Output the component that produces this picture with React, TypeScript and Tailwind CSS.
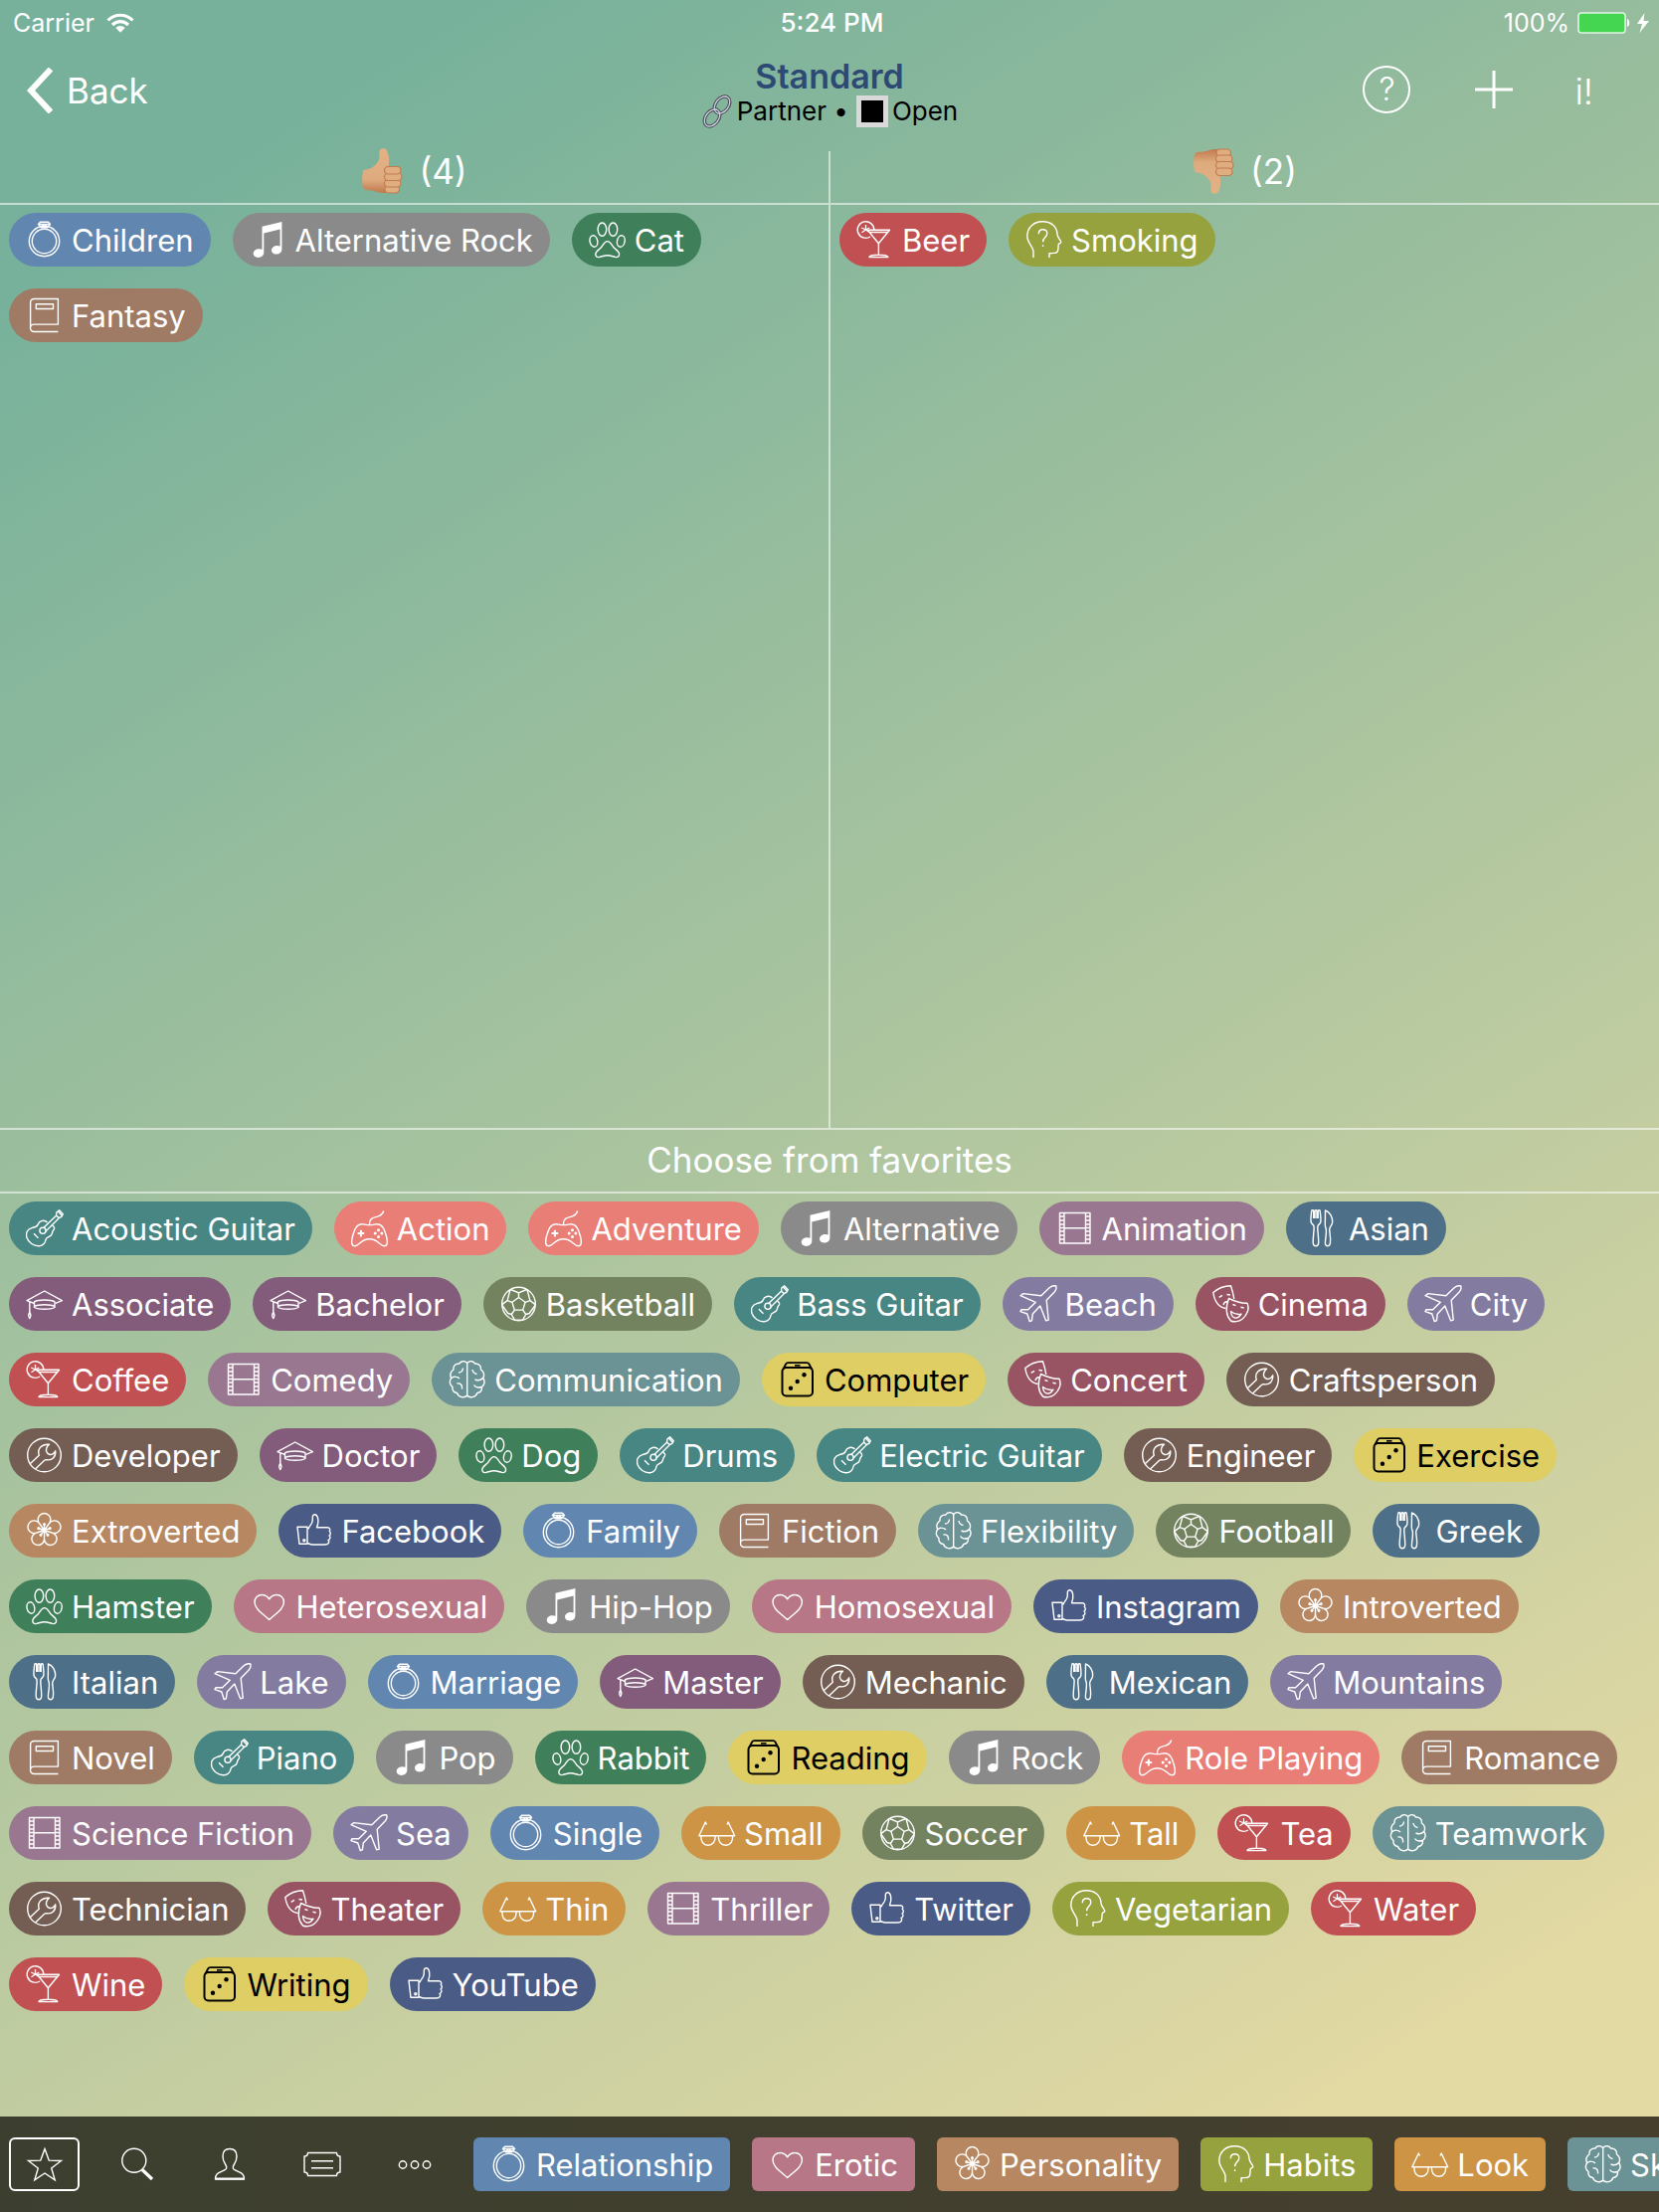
import type { ReactNode } from 'react';

type Category =
  | 'ring' | 'music' | 'paw' | 'book' | 'cocktail' | 'head' | 'guitar' | 'gamepad' | 'film' | 'cutlery' | 'cap'
  | 'ball' | 'plane' | 'masks' | 'brain' | 'dice' | 'wrench' | 'flower' | 'thumb' | 'heart' | 'glasses';

const PETAL_TURNS = [0, 72, 144, 216, 288];
const FILM_HOLES = [7, 11, 15, 18.5, 22, 26, 30];

const COLORS: Record<Category, string> = {
  ring: 'bg-[#6186b0] text-white',
  music: 'bg-[#8a8a8a] text-white',
  paw: 'bg-[#3f7f5a] text-white',
  book: 'bg-[#9f7b65] text-white',
  cocktail: 'bg-[#c05052] text-white',
  head: 'bg-[#95a23d] text-white',
  guitar: 'bg-[#488683] text-white',
  gamepad: 'bg-[#e97e77] text-white',
  film: 'bg-[#9a7790] text-white',
  cutlery: 'bg-[#4d6f87] text-white',
  cap: 'bg-[#835b7b] text-white',
  ball: 'bg-[#74835f] text-white',
  plane: 'bg-[#847ca0] text-white',
  masks: 'bg-[#985463] text-white',
  brain: 'bg-[#6b9294] text-white',
  dice: 'bg-[#dece64] text-black',
  wrench: 'bg-[#745e53] text-white',
  flower: 'bg-[#b68760] text-white',
  thumb: 'bg-[#4a5b86] text-white',
  heart: 'bg-[#b77786] text-white',
  glasses: 'bg-[#cc9444] text-white',
};

const DRAWINGS: Record<Category, ReactNode> = {
  ring: (
    <>
      <circle cx="18.5" cy="20.5" r="15.2" />
      <circle cx="18.5" cy="20.5" r="12.2" />
      <path d="M14.5 1.2h8l2 2.3-3 3.2h-6l-3-3.2z M12.5 3.5h12 M16.5 3.5l2 3 2-3" />
    </>
  ),
  music: (
    <path
      d="M12.5 5.7 32.4 1V28.8c0 3-2.6 4.8-5.6 4.8-2.8 0-4.8-1.6-4.8-4 0-2.7 2.8-4.6 5.8-4.6 1 0 2 .2 2.8.6V8.6L14.3 12.4V32c0 3-2.8 4.9-5.8 4.9-2.8 0-4.8-1.6-4.8-4.1 0-2.7 2.8-4.6 5.8-4.6 1.1 0 2.2.2 3 .6z"
      fill="currentColor"
      stroke="none"
    />
  ),
  paw: (
    <>
      <ellipse cx="13.4" cy="8.6" rx="4.3" ry="6.6" />
      <ellipse cx="24.4" cy="8.6" rx="4.3" ry="6.6" />
      <ellipse cx="4.9" cy="20.5" rx="3.8" ry="5.8" transform="rotate(-12 4.9 20.5)" />
      <ellipse cx="32.3" cy="20.5" rx="3.8" ry="5.8" transform="rotate(12 32.3 20.5)" />
      <path d="M18.7 20.6c3.2 0 4 3.6 6.3 6.2 2 2.2 5.6 3.6 5.6 7 0 2.4-1.8 3.2-4.2 2.6-2.6-.6-4.8-1.6-7.7-1.6s-5.1 1-7.7 1.6c-2.4.6-4.2-.2-4.2-2.6 0-3.4 3.6-4.8 5.6-7 2.3-2.6 3.1-6.2 6.3-6.2z" />
    </>
  ),
  book: (
    <>
      <path d="M32.4 35.5H8.2a3.6 3.6 0 0 1 0-7.4h24.2V2.5H8.2C6 2.5 4.6 3.9 4.6 6v25.5" />
      <path d="M10.3 7.7h17.2v4.8H10.3z" />
    </>
  ),
  cocktail: (
    <>
      <path d="M17.8 9A8.3 8.3 0 1 0 14 16" />
      <path d="M9.5 4v5l-4 2.8M9.5 9l3.3 2.2M9.5 9 5.2 7M9.5 9l3.8-2" strokeWidth="1.3" />
      <path d="M11.3 9.3h22.2L22.4 22.8 11.3 9.3z M13 11.5h18.7 M22.4 22.8v11.4 M13 36.6c0-1.7 6-2.4 9.4-2.4s9.4.7 9.4 2.4z" />
    </>
  ),
  head: (
    <>
      <path d="M8 37v-6.5C8 26.5 1.8 22 1.8 15.5 1.8 6.5 8.5.8 17.3.8S31.6 6 32 13.5c0 2.8 3.8 6.2 3.8 8 0 1.1-2.4 1.3-2.6 2.5-.4 2.5.3 5.3-1.2 7.2-1.6 1.8-4.5 1.3-8 1.5V37" />
      <path d="M13.3 13.2c0-2.7 1.8-4.4 4.3-4.4s4.2 1.7 4.2 4c0 3.7-4.2 4-4.2 8.5 M17.6 24.3v1.6" />
    </>
  ),
  guitar: (
    <>
      <path d="M21.5 13c-3-3.2-8.3-1.5-9.3 2-.8 3-3 2.6-6.2 3.6-4.7 1.4-6.4 5.2-5 9.8 1.6 4.7 6.8 8.8 12.5 8.3 4.2-.4 6-3.2 6.5-6.3.4-2.5 3.1-2.5 5-4 1.9-1.6 1.2-4 2.9-5.8 1.4-1.6.6-3.6-2-5.2" />
      <circle cx="17" cy="21.3" r="3.1" />
      <path d="m18 18.3 13-12.5M20 22 33.5 8.5M30.5 6l.5-3.3 2.6-1.9 3.7 3.9-1.5 2.7-2.6 1.1zM32 1.5l4.5 5M8 24.3l4.5 4.5" />
    </>
  ),
  gamepad: (
    <>
      <path d="M18.5 15.6c-4 0-6-1.1-8-.8C5 15.5 3.5 20 1.5 27c-1.5 6-1 9.8 2 9.8 5 0 6-7 15-7s10 7 15 7c3 0 3.5-3.8 2-9.8-2-7-3.5-11.5-9-12.2-2-.3-4 .8-8 .8zM18.5 15.5C18 7.5 24 8.5 28 6.7c3-1.3 4-2.7 4.7-5.2" />
      <path d="M9.9 20.8v6.6M6.6 24.1h6.6" strokeWidth="2" />
      <g fill="currentColor" stroke="none">
        <circle cx="27.5" cy="20.8" r="1.5" />
        <circle cx="27.5" cy="27.4" r="1.5" />
        <circle cx="24.2" cy="24.1" r="1.5" />
        <circle cx="30.8" cy="24.1" r="1.5" />
      </g>
    </>
  ),
  film: (
    <>
      <path d="M3.5 3.5h30.5v30.5H3.5zM8 3.5V34M29.5 3.5V34M8 18.7h21.5" />
      {FILM_HOLES.map((y) => (
        <path key={y} d={`M3.5 ${y}H8M29.5 ${y}H34`} />
      ))}
    </>
  ),
  cutlery: (
    <>
      <path d="M8.7 1.5c-.5 4-1.2 9-.5 11.5.6 2 2.8 2 2.9 4.5.2 5-1.2 11-.9 16 .2 4.3 5.3 4.3 5.5 0 .3-5-1.1-11-.9-16 .1-2.5 2.3-2.5 2.9-4.5.7-2.5 0-7.5-.5-11.5-.2-1-2-1-2 0v7.5M8.7 1.5c.2-1 2-1 2 0V9M12 9V1.5c.2-1 1.8-1 2 0V9" />
      <path d="M22.5 1c4.5 1.2 7.2 6.5 7.2 11.5 0 3.3-3 4.8-3 7.5 0 4 1.5 8 .7 14-.4 3.7-5 3.7-5 0 0-4.5 1.3-8.5 1-13-.2-2.5-1.2-3.5-1.1-6z" />
    </>
  ),
  cap: (
    <>
      <path d="M8.5 18.5 1 15.7 18.7 6l17.7 9.7-6.6 2.7" />
      <path d="M8.5 16.8c4-2.4 16.5-2.4 20.5 0v5.7c-4 2.4-16.5 2.4-20.5 0zM8.5 21.5c4-2.4 16.5-2.4 20.5 0M3.8 17v10.5" />
      <path d="M3.8 27.5c-1.3 1.8-2 3.2 0 6 2-2.8 1.3-4.2 0-6z" />
    </>
  ),
  ball: (
    <>
      <circle cx="18.5" cy="19" r="16.8" />
      <path d="m18.5 12.5 6.6 4.8-2.4 7.8h-8.4l-2.4-7.8zM18.5 12.5V7.8M25.1 17.3l4.8-1.7M22.7 25.1l3 4.4M14.3 25.1l-3 4.4M11.9 17.3l-4.8-1.7M10.5 4.5l8 3.3 8-3.3M27 4.5l2.9 11.1 5.3 4M35 20.5l-5.8 8-3.5 1-3.2 5.8M22.5 35.3h-8M14.5 35.3l-3.2-5.8-3.5-1-5.8-8M1.8 19.6l5.3-4L10 4.5" />
    </>
  ),
  plane: (
    <path d="M36.8 1c-2.3-.8-5 .2-7 2l-8 7.8-18-2.2L1 10.7l15.3 6.6-7.7 7.5-6.6-.2-1 2 6.8 2.4 2.4 7.5 2.2-.7.9-6.9 7.5-8 5.9 15 2.5-.8-2-19.8 8-8.3c1.6-1.8 2.2-4 1.6-5.8z" />
  ),
  masks: (
    <>
      <path d="M16.5 13.5c6 2.8 12 5.2 18.5 4.7 2.8 5.8-.5 12.5-5 16-3.5 2.7-8.5 3.2-11.5 1.8-6-6.5-5-14.5-2-22.5z" />
      <path d="M13.5 23.5C6 22.3 2 15.5.8 7.5 5.5 3.5 11.5 1 18.5.8c1.3 3.9 2.5 8.3 3.3 13M6.7 12.3l3.3-2M14.5 9.5l3.5.5M11 20c.5-2.5 2.3-3.5 4.5-3.2M20.5 19.5l3 1.2M28.5 22.3l3.2.7M18.5 26.5c3.5 2.8 6.5 3.6 10.5 2.7-2 3.3-4 4.3-6.5 3.8-2.3-.5-3.7-3-4-6.5z" />
    </>
  ),
  brain: (
    <path d="M18.7 2.5C16.5-.3 12 .3 11 3 7 2.8 4.5 5.5 5 9c-3 1.8-4 5.5-2.3 8.5C.5 20.5 1 24.5 4 26.5c-.5 3.5 1.5 5.8 4.5 6 1.5 4.5 8 5.5 10.2 2.5V2.5zM18.7 2.5c2.2-2.8 6.7-2.2 7.7.5 4-.2 6.5 2.5 6 6 3 1.8 4 5.5 2.3 8.5 2.2 3 1.7 7-1.3 9 .5 3.5-1.5 5.8-4.5 6-1.5 4.5-8 5.5-10.2 2.5M14.5 7.5c-.3 3-2 4.5-4.5 4.5M3 17.5c2.5-1.8 6-1.5 8 .5M8.5 23c3.5-.5 5.5 1.5 5 5.5M24 9c.3 2.5 2 4 4.5 4.5M34.5 17.5c-2 2.3-5 2.8-8 1.5M33 26.5c-2.5 1-6 .5-7.5-2" />
  ),
  dice: (
    <>
      <rect x="3.5" y="7" width="30.5" height="28.5" rx="4" strokeWidth="2" />
      <path d="m4.5 8.5 2.6-5c.5-1 1-1.3 2.2-1.3h19c1.2 0 1.7.3 2.2 1.3l2.6 5" strokeWidth="1.8" />
      <path d="M16 4.8h5.5" strokeWidth="1.6" />
      <g fill="currentColor" stroke="none">
        <circle cx="25.5" cy="14.3" r="2.2" />
        <circle cx="18.7" cy="21" r="2.2" />
        <circle cx="12" cy="27.8" r="2.2" />
      </g>
    </>
  ),
  wrench: (
    <>
      <circle cx="18.5" cy="19" r="16.8" />
      <path d="m4.5 27.5 8.8-8.2C11 12.5 16 7.5 23.5 8.3c-2 1.7-3.7 4-2.8 7.2.7 2 1.5 2.5 3.3 3 2.5.2 4.5-1.5 5.7-3.7.6 5.7-3 9.7-8.7 9-1-.1-1.5-.2-2 .3L9.5 33" />
    </>
  ),
  flower: (
    <>
      <path d="M13.6 11.8a6.3 6.3 0 1 1 9.8 0 6.3 6.3 0 1 1 3 9.3 6.3 6.3 0 1 1-7.9 5.7 6.3 6.3 0 1 1-7.9-5.7 6.3 6.3 0 1 1 3-9.3z" />
      {PETAL_TURNS.map((turn) => (
        <g key={turn} transform={`rotate(${turn} 18.5 18.5)`}>
          <path d="M18.5 18.5v-6.5M18.5 18.5l4.7-6.5" />
          <circle cx="18.5" cy="12.5" r="1.5" fill="currentColor" stroke="none" />
        </g>
      ))}
    </>
  ),
  thumb: (
    <>
      <path d="M2 15.3h10v17H4zM12 31.5c2 .5 3 1.5 5 1.5h12.5c4 0 5-3 3.5-4.5 2.2-.8 2.5-3.3 1-4.5 1.7-1 1.7-3.5.2-4.5 1.2-1.5.3-3.8-2-3.8H21.5c1.2-2.7 1.7-5.5 1.2-8.5-.4-2.5-1.2-4.5-3.2-4.5-2.5 0-2.2 2.5-2.2 5.5 0 4-3 5.5-4.3 9" />
      <circle cx="8.8" cy="28.7" r="1" />
    </>
  ),
  heart: <path d="M18.7 32.5C11 25.5 4 21.5 4 14.8c0-4.3 3.2-7.3 7.2-7.3 3.3 0 5.8 1.6 7.5 4.3 1.7-2.7 4.2-4.3 7.5-4.3 4 0 7.2 3 7.2 7.3 0 6.7-7 10.7-14.7 17.7z" />,
  glasses: (
    <path d="M8.5 10.5 7.3 8 .8 21.7h35.9L30.2 8 29 10.5M2.8 21.7c0 6 2.4 9.5 7 9.5s7.4-3.3 7.4-9.5M20.3 21.7c0 6.2 2.8 9.5 7.4 9.5s7-3.5 7-9.5" />
  ),
};

function Drawing({ children }: { children: ReactNode }) {
  return (
    <svg
      viewBox="0 0 38 38"
      className="size-[38px] shrink-0"
      fill="none"
      stroke="currentColor"
      strokeWidth="1.4"
      strokeLinejoin="round"
      aria-hidden="true"
    >
      {children}
    </svg>
  );
}

type Tag = [string, Category];

const LIKES: Tag[] = [['Children', 'ring'], ['Alternative Rock', 'music'], ['Cat', 'paw'], ['Fantasy', 'book']];
const DISLIKES: Tag[] = [['Beer', 'cocktail'], ['Smoking', 'head']];

const FAVORITES: Tag[] = [
  ['Acoustic Guitar', 'guitar'], ['Action', 'gamepad'], ['Adventure', 'gamepad'], ['Alternative', 'music'],
  ['Animation', 'film'], ['Asian', 'cutlery'], ['Associate', 'cap'], ['Bachelor', 'cap'], ['Basketball', 'ball'],
  ['Bass Guitar', 'guitar'], ['Beach', 'plane'], ['Cinema', 'masks'], ['City', 'plane'], ['Coffee', 'cocktail'],
  ['Comedy', 'film'], ['Communication', 'brain'], ['Computer', 'dice'], ['Concert', 'masks'],
  ['Craftsperson', 'wrench'], ['Developer', 'wrench'], ['Doctor', 'cap'], ['Dog', 'paw'], ['Drums', 'guitar'],
  ['Electric Guitar', 'guitar'], ['Engineer', 'wrench'], ['Exercise', 'dice'], ['Extroverted', 'flower'],
  ['Facebook', 'thumb'], ['Family', 'ring'], ['Fiction', 'book'], ['Flexibility', 'brain'], ['Football', 'ball'],
  ['Greek', 'cutlery'], ['Hamster', 'paw'], ['Heterosexual', 'heart'], ['Hip-Hop', 'music'],
  ['Homosexual', 'heart'], ['Instagram', 'thumb'], ['Introverted', 'flower'], ['Italian', 'cutlery'],
  ['Lake', 'plane'], ['Marriage', 'ring'], ['Master', 'cap'], ['Mechanic', 'wrench'], ['Mexican', 'cutlery'],
  ['Mountains', 'plane'], ['Novel', 'book'], ['Piano', 'guitar'], ['Pop', 'music'], ['Rabbit', 'paw'],
  ['Reading', 'dice'], ['Rock', 'music'], ['Role Playing', 'gamepad'], ['Romance', 'book'],
  ['Science Fiction', 'film'], ['Sea', 'plane'], ['Single', 'ring'], ['Small', 'glasses'], ['Soccer', 'ball'],
  ['Tall', 'glasses'], ['Tea', 'cocktail'], ['Teamwork', 'brain'], ['Technician', 'wrench'],
  ['Theater', 'masks'], ['Thin', 'glasses'], ['Thriller', 'film'], ['Twitter', 'thumb'], ['Vegetarian', 'head'],
  ['Water', 'cocktail'], ['Wine', 'cocktail'], ['Writing', 'dice'], ['YouTube', 'thumb'],
];

const CATEGORIES: Tag[] = [
  ['Relationship', 'ring'], ['Erotic', 'heart'], ['Personality', 'flower'], ['Habits', 'head'],
  ['Look', 'glasses'], ['Skills', 'brain'],
];

function TagButton({ tag, shape }: { tag: Tag; shape: string }) {
  const [label, category] = tag;
  return (
    <button
      type="button"
      className={`flex h-[54px] shrink-0 items-center gap-2 px-[17px] text-[31px] leading-10 whitespace-nowrap ${shape} ${COLORS[category]}`}
    >
      <Drawing>{DRAWINGS[category]}</Drawing>
      <span className="pt-0.5">{label}</span>
    </button>
  );
}

function TagList({ tags }: { tags: Tag[] }) {
  return (
    <div className="flex flex-wrap gap-[22px] pt-2 pr-4 pl-[9px]">
      {tags.map((tag) => (
        <TagButton key={tag[0]} tag={tag} shape="rounded-full" />
      ))}
    </div>
  );
}

function HandEmoji({ down = false }: { down?: boolean }) {
  return (
    <svg viewBox="0 0 42 46" className={down ? 'h-[46px] w-[42px] -scale-y-100' : 'h-[46px] w-[42px]'} aria-hidden="true">
      <defs>
        <linearGradient id="skin" x1="0" y1="0" x2="0" y2="1">
          <stop offset="0" stopColor="#e3b284" />
          <stop offset="0.7" stopColor="#deab7e" />
          <stop offset="1" stopColor="#c07a4c" />
        </linearGradient>
      </defs>
      <path
        d="M2.5 22C1 25 .8 34 1.8 39c.6 3 3 3.5 6.2 3.2C13 42 16 45 24 45h9c3 0 4.5-2 4-4.5L29 20c-1-1.5-1.5-3-1-6 .5-4.5-.5-9-2.5-12.5-1.5-2-7-1.5-7 1.5 0 5.5.5 8.5-2.5 12C13 19 8.5 21.5 2.5 22z"
        fill="url(#skin)"
      />
      <g fill="#e0ad80" stroke="#bf7d50" strokeWidth="1.2">
        <rect x="24" y="37.5" width="14.5" height="7.5" rx="3.7" />
        <rect x="23.5" y="31.5" width="16.5" height="7.5" rx="3.7" />
        <rect x="23.5" y="25" width="17.5" height="7.5" rx="3.7" />
        <rect x="23.5" y="18.5" width="16.5" height="7.5" rx="3.7" />
      </g>
    </svg>
  );
}

function Column({ title, down, count, tags }: { title: string; down?: boolean; count: number; tags: Tag[] }) {
  return (
    <section aria-label={title} className="flex min-w-0 flex-1 flex-col">
      <h2 className="flex h-[54px] items-center justify-center gap-4 border-b-2 border-white/55 pb-3 text-[35px] leading-10">
        <HandEmoji down={down} />({count})
      </h2>
      <TagList tags={tags} />
    </section>
  );
}

const TOOLS: { label: string; drawing: ReactNode }[] = [
  {
    label: 'Favorites',
    drawing: <path d="m19 3.5 4.2 11.6 12.3.4-9.8 7.5 3.5 11.8L19 28l-10.2 6.8L12.3 23l-9.8-7.5 12.3-.4z" strokeLinejoin="miter" />,
  },
  {
    label: 'Search',
    drawing: (
      <>
        <circle cx="15.8" cy="15.3" r="12" />
        <path d="m24 24.5 10 9.5" strokeWidth="3.2" />
      </>
    ),
  },
  {
    label: 'Person',
    drawing: (
      <>
        <path d="M4.5 34c0-7.5 6-6.5 10.5-10 1.2-1.2.8-3-.5-5-1.7-2.5-2.5-5-2.5-8 0-5 2.5-7.5 7-7.5s7 2.5 7 7.5c0 3-.8 5.5-2.5 8-1.3 2-1.7 3.8-.5 5C27.5 27.5 33.5 26.5 33.5 34z" />
        <path d="M4.5 33.5h29" strokeWidth="2" />
      </>
    ),
  },
  {
    label: 'List',
    drawing: <path d="M4.5 7.5h29c0 2.200 1.300 3.500 3.500 3.500v16c-2.200 0-3.500 1.300-3.500 3.500h-29c0-2.200-1.300-3.500-3.500-3.500v-16c2.200 0 3.500-1.300 3.500-3.500zM8 15.700h22M8 22.700h22" />,
  },
  {
    label: 'More',
    drawing: (
      <>
        <circle cx="7" cy="19.5" r="3.7" />
        <circle cx="19" cy="19.5" r="3.7" />
        <circle cx="31" cy="19.5" r="3.7" />
      </>
    ),
  },
];

function StatusBar() {
  return (
    <div className="grid h-11 grid-cols-[1fr_auto_1fr] items-center pt-px pr-2 pl-[13px] text-[25px] leading-8">
      <div className="flex items-center gap-3">
        <span>Carrier</span>
        <svg viewBox="0 0 28 20" className="h-5 w-7" fill="none" stroke="currentColor" strokeWidth="3.2" aria-hidden="true">
          <path d="M1.5 7.5a17.5 17.5 0 0 1 25 0M6 12a11.3 11.3 0 0 1 16 0" />
          <path d="M14 19.8 9.3 15a6.6 6.6 0 0 1 9.4 0z" fill="currentColor" stroke="none" />
        </svg>
      </div>
      <span className="text-[26px] font-medium">5:24 PM</span>
      <div className="flex items-center justify-end gap-2">
        <span>100%</span>
        <svg viewBox="0 0 74 22" className="h-[22px] w-[74px]" aria-hidden="true">
          <rect x="1" y="1" width="47" height="20" rx="3" fill="#44d551" stroke="#fff" strokeOpacity=".8" strokeWidth="1.6" />
          <path d="M50 7c3 .5 3 7.5 0 8z" fill="#fff" />
          <path d="M67.5 1 60 12h5l-2.5 9L72 9h-5.5z" fill="#fff" />
        </svg>
      </div>
    </div>
  );
}

function NavBar() {
  return (
    <header className="grid h-[108px] grid-cols-[1fr_auto_1fr] items-center pb-4">
      <button type="button" className="flex items-center gap-3.5 justify-self-start pt-0.5 pl-[27px] text-[35px] leading-10">
        <svg viewBox="0 0 26 46" className="h-[46px] w-[26px]" fill="none" stroke="currentColor" strokeWidth="6" aria-hidden="true">
          <path d="M24 1.5 4 23 24 44.5" />
        </svg>
        Back
      </button>
      <div className="pt-2 text-center">
        <h1 className="text-[34px] leading-9 font-semibold text-[#2c4a73]">Standard</h1>
        <p className="flex items-center justify-center text-[26px] leading-8 text-black">
          <svg viewBox="0 0 32 34" className="mr-1 h-[34px] w-8" fill="none" aria-hidden="true">
            <g strokeWidth="3.4" stroke="#4c4650">
              <ellipse cx="21" cy="10.5" rx="6.5" ry="9.5" transform="rotate(38 21 10.5)" />
              <ellipse cx="11" cy="23.5" rx="6.5" ry="9.5" transform="rotate(38 11 23.5)" />
            </g>
            <g strokeWidth="1.3" stroke="#c9d3e6">
              <ellipse cx="21" cy="10.5" rx="6.5" ry="9.5" transform="rotate(38 21 10.5)" />
              <ellipse cx="11" cy="23.5" rx="6.5" ry="9.5" transform="rotate(38 11 23.5)" />
            </g>
          </svg>
          Partner •
          <span className="mr-1 ml-2 size-8 border-[5px] border-[#d9d9d9] bg-black" />
          Open
        </p>
      </div>
      <div className="flex items-center justify-end pr-[66px]">
        <button type="button" className="size-12 rounded-full border-2 border-white text-[32px] leading-10 font-light">
          ?
        </button>
        <button type="button" aria-label="Add" className="ml-[65px]">
          <svg viewBox="0 0 38 38" className="size-[38px]" stroke="currentColor" strokeWidth="3" aria-hidden="true">
            <path d="M19 0v38M0 19h38" />
          </svg>
        </button>
        <button type="button" className="ml-[62px] pt-1 text-[36px] leading-10 font-light">
          i!
        </button>
      </div>
    </header>
  );
}

export default function App() {
  return (
    <div className="flex min-h-screen flex-col bg-[linear-gradient(148deg,#77b19b_9%,#e3d9a3_91%)] font-['Inter','Liberation_Sans',sans-serif] text-white">
      <StatusBar />
      <NavBar />
      <main className="flex flex-1 flex-col">
        <div className="flex flex-1 divide-x-2 divide-white/55">
          <Column title="Likes" count={4} tags={LIKES} />
          <Column title="Dislikes" down count={2} tags={DISLIKES} />
        </div>
        <section className="pb-[106px]">
          <h2 className="border-y-2 border-white/55 pt-2.5 pb-3 text-center text-[35px] leading-10">Choose from favorites</h2>
          <TagList tags={FAVORITES} />
        </section>
      </main>
      <footer className="flex h-24 items-center gap-[22px] overflow-hidden bg-linear-to-r from-[#3c3f2f] to-[#463f2e] pl-[9px]">
        <nav aria-label="Tools" className="flex shrink-0 gap-[22px]">
          {TOOLS.map((tool, index) => (
            <button
              key={tool.label}
              type="button"
              aria-label={tool.label}
              className={`flex h-[54px] w-[71px] items-center justify-center rounded-md border-2 ${index === 0 ? 'border-white' : 'border-transparent'}`}
            >
              <Drawing>{tool.drawing}</Drawing>
            </button>
          ))}
        </nav>
        <nav aria-label="Categories" className="ml-0.5 flex shrink-0 gap-[22px]">
          {CATEGORIES.map((tag) => (
            <TagButton key={tag[0]} tag={tag} shape="rounded-md" />
          ))}
        </nav>
      </footer>
    </div>
  );
}
